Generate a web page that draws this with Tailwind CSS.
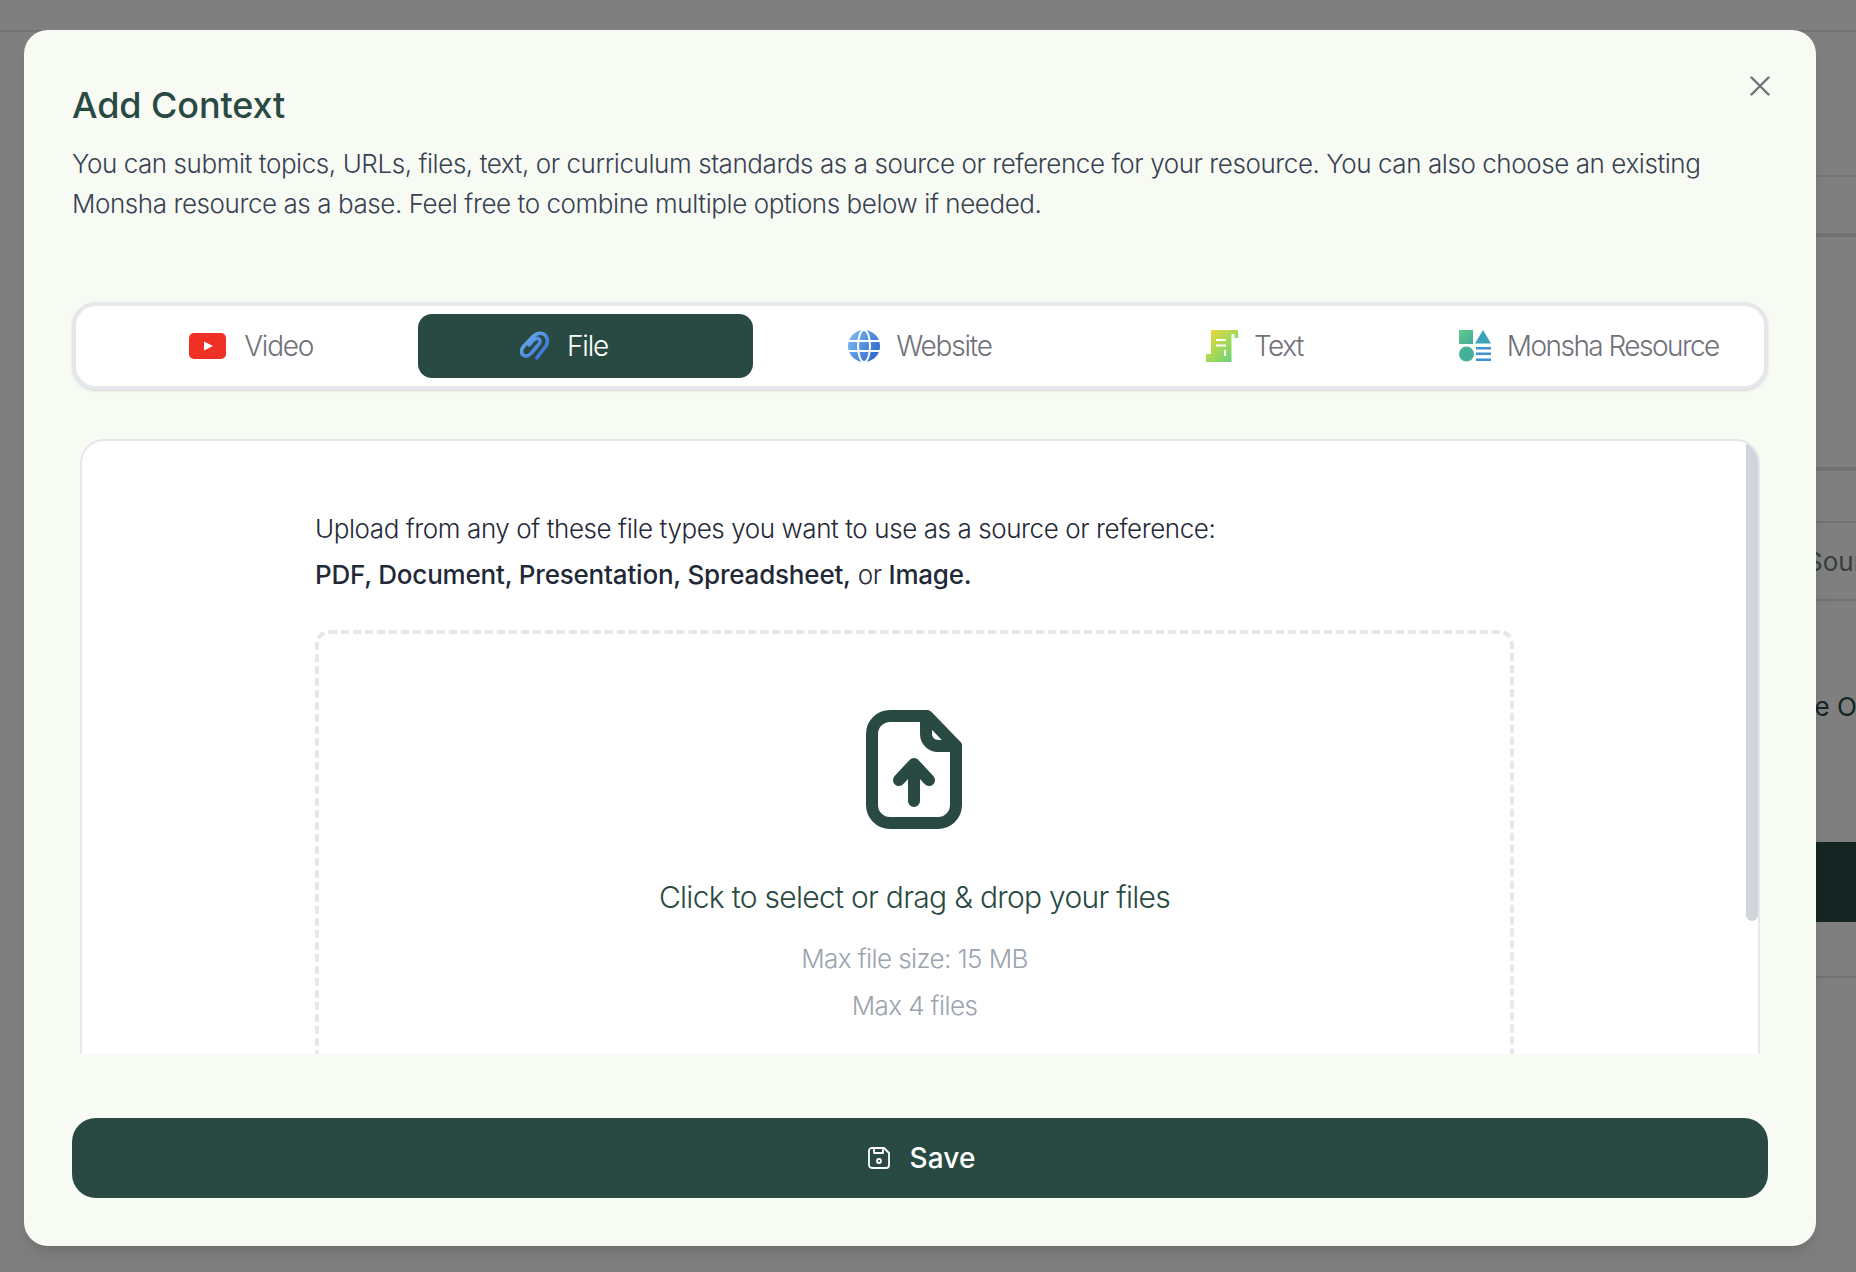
<!DOCTYPE html>
<html lang="en">
<head>
<meta charset="utf-8">
<title>Add Context</title>
<script src="https://cdn.jsdelivr.net/npm/@tailwindcss/browser@4"></script>
</head>
<body class="relative w-[1856px] h-[1272px] overflow-hidden bg-white font-['Inter',sans-serif]">
  <!-- page behind the dialog -->
  <div class="flex flex-col h-full">
    <div class="h-[32px] border-b-2 border-[#e7e7e7]"></div>
    <div class="ml-auto w-[300px] flex flex-col text-[26px]">
      <div class="h-[145px] border-b-2 border-[#e7e7e7]"></div>
      <div class="h-[60px] border-b-4 border-[#e5e5e5]"></div>
      <div class="h-[234px] border-b-4 border-[#e5e5e5]"></div>
      <div class="h-[52px] border-b-2 border-[#e5e5e5]"></div>
      <div class="h-[78px] border-b-2 border-[#e5e5e5] flex items-center pl-[250px] whitespace-nowrap text-[#6b7f78]">Source</div>
      <div class="h-[241px] pl-[185px] pt-[86px] whitespace-nowrap text-[#2a4a43]">Course Outline</div>
      <div class="h-[80px] bg-[#2a4a43]"></div>
      <div class="h-[56px] border-b-2 border-[#e5e5e5]"></div>
    </div>
  </div>
  <div class="absolute inset-0 bg-black/50"></div>

  <!-- dialog -->
  <div class="absolute left-[24px] top-[30px] w-[1792px] h-[1216px] rounded-[24px] bg-[#f7fbf4] shadow-lg flex flex-col px-[48px]">
    <button class="absolute right-[46px] top-[46px] w-[20px] h-[20px] text-[#71717a]">
      <svg viewBox="0 0 20 20" class="w-[20px] h-[20px]" fill="none" stroke="currentColor" stroke-width="2.4" stroke-linecap="round"><path d="M1.5 1.5 18.5 18.5M18.5 1.5 1.5 18.5"/></svg>
    </button>
    <h1 class="mt-[51px] h-[48px] leading-[48px] text-[36px] font-medium tracking-[-0.1px] text-[#294a42]">Add Context</h1>
    <p class="mt-[15px] text-[26px] leading-[40px] tracking-[-0.43px] font-light text-[#374151]">You can submit topics, URLs, files, text, or curriculum standards as a source or reference for your resource. You can also choose an existing Monsha resource as a base. Feel free to combine multiple options below if needed.</p>

    <!-- tabs -->
    <div class="mt-[78px] h-[88px] shrink-0 grid grid-cols-5 items-center rounded-[24px] border-4 border-[#e5e7eb] bg-white px-[8px] shadow-sm text-[28px] tracking-[-1.2px] font-light text-[#71717a]">
      <div class="h-[64px] flex items-center justify-center gap-[18px]">
        <svg viewBox="0 0 37 26" class="w-[37px] h-[26px]"><rect width="37" height="26" rx="5" fill="#ee3124"/><path d="M15 8.5 24 13 15 17.5Z" fill="#fff"/></svg>
        <span>Video</span>
      </div>
      <div class="h-[64px] flex items-center justify-center gap-[16px] rounded-[14px] bg-[#294a42] text-white pr-[44px]">
        <svg viewBox="0 0 32 32" class="w-[32px] h-[32px]" fill="none" stroke-linecap="butt" stroke-linejoin="round">
          <defs><linearGradient id="clip" x1="0" y1="0" x2="1" y2="1"><stop offset="0" stop-color="#72b4ee"/><stop offset="1" stop-color="#2f68d6"/></linearGradient></defs>
          <path d="M17 29 27 16C30 11 28 4.500 23 3.500 19.500 2.500 16.500 4 14 6.500L4.500 16.500C1.500 20 2 24 5 25.500 7.500 27 10 25.500 12 23.500L20 14C22 11.500 21 9 19 8.500 17 8 15.500 9 14 10.500L9 16" stroke="url(#clip)" stroke-width="3.600"/>
        </svg>
        <span>File</span>
      </div>
      <div class="h-[64px] flex items-center justify-center gap-[16px]">
        <svg viewBox="0 0 32 32" class="w-[32px] h-[32px]">
          <defs><linearGradient id="globe" x1="0" y1="0.2" x2="1" y2="0.8"><stop offset="0" stop-color="#7cbcf0"/><stop offset="1" stop-color="#2a62cc"/></linearGradient></defs>
          <circle cx="16" cy="16" r="16" fill="url(#globe)"/>
          <g fill="none" stroke="#fff" stroke-width="2"><ellipse cx="16" cy="16" rx="6" ry="16"/><path d="M0 11H32M0 21H32"/></g>
        </svg>
        <span>Website</span>
      </div>
      <div class="h-[64px] flex items-center justify-center gap-[16px]">
        <svg viewBox="0 0 32 32" class="w-[32px] h-[32px]">
          <defs><linearGradient id="txt" x1="0" y1="0" x2="1" y2="1"><stop offset="0" stop-color="#f6d63a"/><stop offset=".55" stop-color="#9fd95a"/><stop offset="1" stop-color="#58cf84"/></linearGradient></defs>
          <path d="M5 0H32V8H28.500V4H25.500V32H0V24H5Z" fill="url(#txt)"/>
          <path d="M10 9H20V11H10ZM10 14.500H20V16.500H10ZM18 20H20V26H18Z" fill="#fff"/>
        </svg>
        <span class="tracking-[-1.5px]">Text</span>
      </div>
      <div class="h-[64px] flex items-center justify-center gap-[16px]">
        <svg viewBox="0 0 32 32" class="w-[32px] h-[32px]">
          <defs><linearGradient id="sq" x1="0" y1="0" x2="1" y2="1"><stop offset="0" stop-color="#5fcb88"/><stop offset="1" stop-color="#45aa9c"/></linearGradient></defs>
          <rect x="0" y="0" width="14" height="14" fill="url(#sq)"/>
          <path d="M24 0 32 13.500H16Z" fill="#3fa3b8"/>
          <circle cx="7.500" cy="24" r="7.500" fill="#45b09a"/>
          <path d="M17 17H32V19.500H17ZM17 22.500H32V25H17ZM17 28.500H32V31H17Z" fill="#4190cf"/>
        </svg>
        <span class="tracking-[-1.55px]">Monsha Resource</span>
      </div>
    </div>

    <!-- content, cut by the footer -->
    <div class="mt-[49px] h-[615px] shrink-0 overflow-hidden px-[8px]">
      <div class="relative h-[900px] overflow-hidden rounded-[24px] border-2 border-[#e5e7eb] bg-white pl-[233px] pr-[244px] pt-[65px]">
        <div class="absolute right-0 top-0 w-[12px] h-[480px] rounded-b-full bg-[#d1d5db]"></div>
        <p class="text-[26px] leading-[46px] tracking-[-0.42px] font-light text-[#1f2937]">Upload from any of these file types you want to use as a source or reference:<br><span class="font-medium tracking-[-0.2px]">PDF, Document, Presentation, Spreadsheet,</span> or <span class="font-medium tracking-[-0.2px]">Image.</span></p>
        <div class="mt-[32px] h-[600px] rounded-[14px] border-4 border-dashed border-[#e5e7eb] flex flex-col items-center pt-[76px]">
          <svg viewBox="0 0 96 120" class="w-[96px] h-[120px] mr-[2px]" fill="none" stroke="#294a42" stroke-width="12" stroke-linecap="round" stroke-linejoin="round">
            <path d="M24 6H61L90 36V95A18 18 0 0 1 72 113H24A18 18 0 0 1 6 95V24A18 18 0 0 1 24 6Z"/>
            <path d="M60 6V24A12 12 0 0 0 72 36H90"/>
            <path d="M48 91V54M33 70 48 54 63 70"/>
          </svg>
          <p class="mt-[45px] text-[30px] leading-[44px] tracking-[-0.7px] text-[#294a42] font-light">Click to select or drag &amp; drop your files</p>
          <p class="mt-[16px] text-[26px] leading-[47px] tracking-[-0.6px] font-light text-[#9ca3af] text-center">Max file size: 15 MB<br>Max 4 files</p>
        </div>
      </div>
    </div>

    <!-- footer -->
    <button class="mt-[64px] h-[80px] shrink-0 rounded-[24px] bg-[#294a42] text-white flex items-center justify-center gap-[20px] text-[28px] font-medium tracking-[0.1px] pl-[3px]">
      <svg viewBox="0 0 22 22" class="w-[22px] h-[22px]" fill="none" stroke="#fff" stroke-width="1.800" stroke-linejoin="round"><path d="M3 1H16L21 6V18A3 3 0 0 1 18 21H4A3 3 0 0 1 1 18V4A3 3 0 0 1 3 1Z"/><path d="M6 1V6H15V1"/><circle cx="11" cy="14" r="2"/></svg>
      <span>Save</span>
    </button>
  </div>
</body>
</html>
